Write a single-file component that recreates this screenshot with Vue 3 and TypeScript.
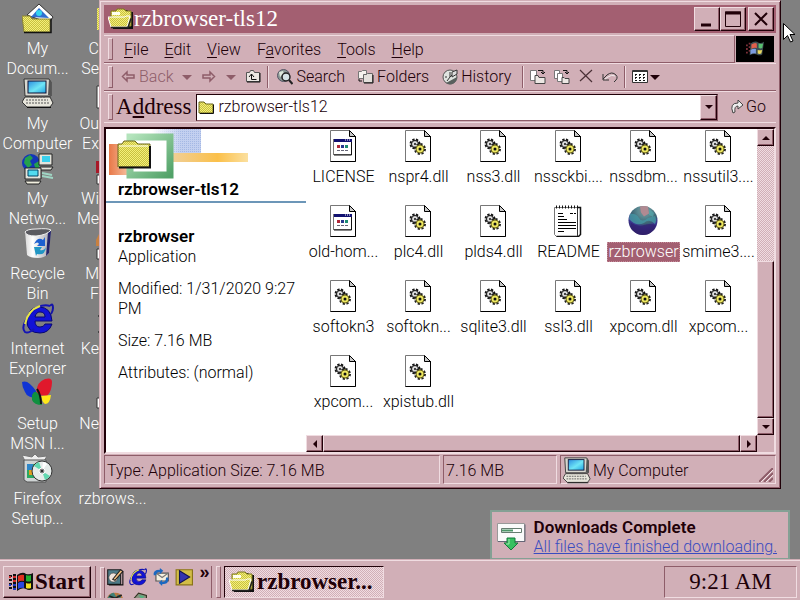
<script setup lang="ts">
interface DesktopItem {
  icon: string
  lines: string[]
  covered?: boolean
}
interface FileItem {
  name: string
  icon: string
  selected?: boolean
}

const shortcuts: DesktopItem[] = [
  { icon: 'docs', lines: ['My', 'Docum...'] },
  { icon: 'computer', lines: ['My', 'Computer'] },
  { icon: 'network', lines: ['My', 'Netwo...'] },
  { icon: 'bin', lines: ['Recycle', 'Bin'] },
  { icon: 'ie', lines: ['Internet', 'Explorer'] },
  { icon: 'msn', lines: ['Setup', 'MSN I...'] },
  { icon: 'setup', lines: ['Firefox', 'Setup...'] },
  { icon: 'edge-yellow', lines: ['C', 'Se'], covered: true },
  { icon: 'edge-white', lines: ['Ou', 'Ex'], covered: true },
  { icon: 'edge-red', lines: ['Wi', 'Me'], covered: true },
  { icon: 'edge-orange', lines: ['M', 'F'], covered: true },
  { icon: 'edge-dots', lines: ['Ke'], covered: true },
  { icon: 'edge-low', lines: ['Ne'], covered: true },
  { icon: 'none', lines: ['rzbrows...'] },
]

const menus: [string, string, string][] = [
  ['', 'F', 'ile'],
  ['', 'E', 'dit'],
  ['', 'V', 'iew'],
  ['F', 'a', 'vorites'],
  ['', 'T', 'ools'],
  ['', 'H', 'elp'],
]

const files: FileItem[] = [
  { name: 'LICENSE', icon: 'page' },
  { name: 'nspr4.dll', icon: 'dll' },
  { name: 'nss3.dll', icon: 'dll' },
  { name: 'nssckbi....', icon: 'dll' },
  { name: 'nssdbm...', icon: 'dll' },
  { name: 'nssutil3....', icon: 'dll' },
  { name: 'old-hom...', icon: 'page' },
  { name: 'plc4.dll', icon: 'dll' },
  { name: 'plds4.dll', icon: 'dll' },
  { name: 'README', icon: 'notes' },
  { name: 'rzbrowser', icon: 'globe', selected: true },
  { name: 'smime3....', icon: 'dll' },
  { name: 'softokn3', icon: 'dll' },
  { name: 'softokn...', icon: 'dll' },
  { name: 'sqlite3.dll', icon: 'dll' },
  { name: 'ssl3.dll', icon: 'dll' },
  { name: 'xpcom.dll', icon: 'dll' },
  { name: 'xpcom...', icon: 'dll' },
  { name: 'xpcom...', icon: 'dll' },
  { name: 'xpistub.dll', icon: 'dll' },
]

const quickLaunch = [
  { icon: 'q-desk', label: 'Show Desktop' },
  { icon: 'ie', label: 'Internet Explorer' },
  { icon: 'q-mail', label: 'Outlook Express' },
  { icon: 'q-play', label: 'Media Player' },
  { icon: 'q-orb', label: 'Browser' },
  { icon: 'q-orb2', label: 'Mail' },
]
</script>

<template>
  <div class="screen">
    <svg class="sprite" aria-hidden="true">
      <defs>
        <pattern id="dither" width="2" height="2" patternUnits="userSpaceOnUse">
          <rect width="2" height="2" fill="#f4f07a" />
          <rect width="1" height="1" fill="#c8c040" />
          <rect x="1" y="1" width="1" height="1" fill="#c8c040" />
        </pattern>
        <linearGradient id="scr" x1="0" y1="0" x2="1" y2="1">
          <stop offset="0" stop-color="#2a8ce0" /><stop offset=".55" stop-color="#6fe6f6" /><stop offset="1" stop-color="#1f9ee0" />
        </linearGradient>
        <linearGradient id="pot" x1="0" x2="1">
          <stop offset="0" stop-color="#d8d8d8" /><stop offset=".3" stop-color="#fff" /><stop offset="1" stop-color="#a4a4ac" />
        </linearGradient>
        <radialGradient id="orb" cx=".55" cy=".15" r=".9">
          <stop offset="0" stop-color="#8a8a90" /><stop offset=".25" stop-color="#5a8a92" /><stop offset=".5" stop-color="#3c6474" /><stop offset=".65" stop-color="#3a3590" /><stop offset="1" stop-color="#2b1a58" />
        </radialGradient>
      </defs>

      <symbol id="docs" viewBox="0 0 32 32">
        <path d="M5 12 17 1 31 14 27 20Z" fill="#fff" stroke="#333" />
        <path d="M9 14 17 5 27 15Z" fill="#2f6fd0" />
        <circle cx="17" cy="10" r="3" fill="#35d4ee" />
        <path d="M0 13h8l2 3h18v13H2Z" fill="url(#dither)" stroke="#8a8430" />
        <path d="M2 29.500h27v-14" fill="none" stroke="#111" stroke-width="1.500" />
      </symbol>

      <symbol id="computer" viewBox="0 0 32 32">
        <path d="M2 1h25l2 3v14H3Z" fill="#d8d8d0" stroke="#333" />
        <path d="M27 1l2 3v14l-3-1Z" fill="#555" />
        <rect x="6" y="3" width="18" height="12" fill="url(#scr)" stroke="#113" />
        <path d="M3 19h25l3 6-3 4H5l-5-5Z" fill="#e8e6dc" stroke="#333" />
        <path d="M4 22h22M4 25h23M9 19h14" stroke="#555" stroke-dasharray="2 1" />
        <path d="M5 29.500h24" stroke="#111" />
      </symbol>

      <symbol id="network" viewBox="0 0 32 32">
        <circle cx="9" cy="10" r="9" fill="#1436b8" />
        <path d="M3 5l5-3 3 3-3 3 2 4-4 3-4-5Z" fill="#24a04c" />
        <path d="M12 11l5-3v7l-3 2Z" fill="#24a04c" />
        <path d="M17 1h13v11H17Z" fill="#e4e4dc" stroke="#222" />
        <path d="M20 3h8v6h-8Z" fill="#39d0ee" />
        <path d="M18 14h13l-2 3H18Z" fill="#e4e4dc" stroke="#222" />
        <path d="M20 20l10 2M20 23l11 2" stroke="#9fd6c4" stroke-width="2" />
        <path d="M3 15h16v11H3Z" fill="#e4e4dc" stroke="#222" />
        <path d="M6 17h10v6H6Z" fill="#52dcf0" stroke="#046" />
        <path d="M3 28h16l-2 3H5Z" fill="#f2f0e0" stroke="#222" />
      </symbol>

      <symbol id="bin" viewBox="0 0 32 32">
        <path d="M3 3 29 2 27 25q-4 5-11 5-8 0-11-3Z" fill="url(#pot)" />
        <path d="M29 3l-2 22-3 3 2-24Z" fill="#24246a" />
        <path d="M3 4q2-3 11-3 12-1 15 1-4 5-15 6-10 0-11-4Z" fill="#5a5a60" stroke="#eee" />
        <path d="M12 16q4-8 9-4l2-3v9h-8l2-2q-1-3-5 0Z" fill="#1d5fd0" />
        <path d="M24 19q-1 9-9 7l-1 2-2-9 8 0-2 3q4 1 6-3Z" fill="#2196c4" />
      </symbol>

      <symbol id="ie" viewBox="0 0 32 32">
        <path d="M28 3q3-4 3 2 0 3-2 6" fill="none" stroke="#1414a8" stroke-width="2" />
        <path fill-rule="evenodd" d="M17 4q12 0 13 14H13q0 6 5 6 4 0 5-3h7q-3 9-12 9-13 0-13-12Q6 4 17 4ZM13 14h10q0-5-5-5-4 0-5 5Z" fill="#1212d6" stroke="#080870" />
        <path d="M28 3Q18 0 8 11-2 24 3 29q3 2 9-3" fill="none" stroke="#1414b4" stroke-width="2" />
        <path d="M18 3Q6 7 3 21" fill="none" stroke="#e6e648" stroke-width="2" />
      </symbol>

      <symbol id="msn" viewBox="0 0 32 32">
        <path d="M0 4q6-3 14 9l2 7q-11 0-13-6Q0 9 0 4Z" fill="#1034d4" />
        <path d="M15 17q-2-12 8-16 7-2 7 3 0 9-5 14Z" fill="#e0182c" />
        <path d="M10 17q3-7 8 1l2 9q-8 0-10-5Z" fill="#109040" />
        <path d="M19 18l10-1q-1 9-6 9-3-2-4-8Z" fill="#ffe818" />
        <path d="M15 11q4 6 4 15" fill="none" stroke="#111" stroke-width="2" />
      </symbol>

      <symbol id="setup" viewBox="0 0 32 32">
        <path d="M2 6 0 2l10 2 3-3 3 3 9-1-3 5v20H4Z" fill="#eee" stroke="#777" />
        <path d="M2 7h22v22H5l-3-2Z" fill="#cfd4d4" stroke="#555" />
        <path d="M5 11h14v14H5Z" fill="#2aa860" />
        <path d="M5 11h6v6H5Z" fill="#2e86c8" /><path d="M7 17h5v5H7Z" fill="#e0a020" />
        <circle cx="20" cy="18" r="10" fill="#e6ecea" stroke="#333" />
        <path d="M20 18l-8-5a10 10 0 0 1 5-4ZM20 18l8 5a10 10 0 0 1-5 4Z" fill="#62d8b0" />
        <path d="M20 18l1-9a9 9 0 0 1 4 2Z" fill="#fff" />
        <circle cx="20" cy="18" r="3" fill="#888" stroke="#fff" /><circle cx="20" cy="18" r="1" fill="#111" />
      </symbol>

      <symbol id="edge-yellow" viewBox="0 0 32 32"><path d="M1 5h30v22H1Z" fill="url(#dither)" /></symbol>
      <symbol id="edge-white" viewBox="0 0 32 32"><path d="M1 8h30v22H1Z" fill="#fff" stroke="#333" /></symbol>
      <symbol id="edge-red" viewBox="0 0 32 32"><path d="M0 8h32v12H0Z" fill="#a81828" /><path d="M1 22h30v9H1Z" fill="#fff" stroke="#333" /></symbol>
      <symbol id="edge-orange" viewBox="0 0 32 32"><path d="M0 12 4 4h26v14H0Z" fill="#c88040" /><path d="M1 21h30v10H1Z" fill="#fff" stroke="#333" /></symbol>
      <symbol id="edge-dots" viewBox="0 0 32 32"><path d="M2 12h6v2H2ZM2 28h6v2H2Z" fill="#444" /></symbol>
      <symbol id="edge-low" viewBox="0 0 32 32"><path d="M1 20h30v10H1Z" fill="#fff" stroke="#333" /></symbol>
      <symbol id="none" viewBox="0 0 32 32" />

      <symbol id="sheet" viewBox="0 0 32 32">
        <path d="M3.500.500h19l6 6v25h-25Z" fill="#fff" stroke="#777" />
        <path d="M28.500 6v25.500h-25" fill="none" stroke="#000" />
        <path d="M22.500.500v6h6Z" fill="#c8c8c8" stroke="#000" />
      </symbol>
      <symbol id="page" viewBox="0 0 32 32">
        <use href="#sheet" />
        <rect x="6.500" y="9.500" width="18" height="15" fill="#fff" stroke="#777" />
        <path d="M24.500 10v15H7" fill="none" stroke="#111" />
        <path d="M7 9h18v3H7Z" fill="#101070" />
        <path d="M18 10h1M20 10h1M22 10h1" stroke="#fff" />
        <path d="M10 15h3v3h-3Z" fill="#b02838" /><path d="M14 15h3v3h-3Z" fill="#26388c" /><path d="M18 15h3v3h-3Z" fill="#1c8c70" />
        <path d="M10 20.500h3M14 20.500h3M18 20.500h3" stroke="#667" />
      </symbol>
      <symbol id="dll" viewBox="0 0 32 32">
        <use href="#sheet" />
        <circle cx="13" cy="14" r="4" fill="#fff" stroke="#111" stroke-width="3" stroke-dasharray="2 1.200" />
        <circle cx="13" cy="14" r="3.500" fill="#ddd" stroke="#111" />
        <circle cx="13" cy="14" r="1" fill="#111" />
        <circle cx="18" cy="19" r="4.500" fill="#eee860" stroke="#222" stroke-width="3" stroke-dasharray="2 1.500" />
        <circle cx="18" cy="19" r="4" fill="#eee860" stroke="#6a6420" />
        <circle cx="18" cy="19" r="1.500" fill="#111" />
      </symbol>
      <symbol id="notes" viewBox="0 0 32 32">
        <path d="M2.500 2.500h23v29h-21l-2-2Z" fill="#fff" stroke="#777" />
        <path d="M25.500 2.500h3v27l-2 2h-22" fill="none" stroke="#111" stroke-width="1.500" />
        <path d="M25.500 3v28" stroke="#333" />
        <path d="M4 2h23" stroke="#111" stroke-width="3" stroke-dasharray="1 2" />
        <path d="M6 8.500h5M18 8.500h3M22 8.500h2M6 11.500h6M6 14.500h9M6 17.500h18M6 20.500h18M6 23.500h18M6 26.500h6" stroke="#000" />
      </symbol>
      <symbol id="globe" viewBox="0 0 32 32">
        <circle cx="16" cy="15.500" r="14.500" fill="url(#orb)" />
        <path d="M3 9q6-1 9 4t9 0l7-2q2 4 0 8-6-6-11-1-8 4-15-4Z" fill="#4596a4" opacity=".8" />
        <path d="M13 1.500q4-1 8 0l1 7-5 3-3-4Z" fill="#b08a92" />
        <path d="M22 4l5 4-1 4-4-2Z" fill="#54a8ac" opacity=".7" />
        <path d="M4 18q7 4 13 2t12 0q-4 10-13 10T4 21Z" fill="#30206e" opacity=".7" />
      </symbol>

      <symbol id="folder-open" viewBox="0 0 26 22">
        <path d="M5 4h5l2-2h7l2 2h4v17H5Z" fill="#111" />
        <path d="M3 3h5l1-2h7l2 2h5v15H3Z" fill="url(#dither)" stroke="#7c7820" />
        <path d="M4 4h8v3H4Z" fill="#fffff0" />
        <path d="M0 9h17l1-1h4l-3 11H3Z" fill="url(#dither)" stroke="#fff" />
        <path d="M3 19.500h17l3-9" fill="none" stroke="#222" stroke-width="1.500" />
      </symbol>
      <symbol id="folder-small" viewBox="0 0 16 16">
        <path d="M1 3h5l2 2h7v9H1Z" fill="url(#dither)" stroke="#6d691c" />
        <path d="M2 14.500h13.500v-9" fill="none" stroke="#111" />
      </symbol>

      <symbol id="arrow-left" viewBox="0 0 16 16"><path d="M2.500 7.500 7 3v3h7v3H7v3Z" fill="none" stroke="#8e5d69" stroke-width="1.500" /></symbol>
      <symbol id="arrow-right" viewBox="0 0 16 16"><path d="M13.500 7.500 9 3v3H2v3h7v3Z" fill="none" stroke="#8e5d69" stroke-width="1.500" /></symbol>
      <symbol id="folder-up" viewBox="0 0 16 16">
        <path d="M1.500 3.500h3l1-2h3l1 2h5v9h-13Z" fill="#ece8e4" stroke="#555" />
        <path d="M15 4v9H2" fill="none" stroke="#111" />
        <path d="M4 8 6.500 5 9 8M6.500 5v5.500h5" fill="none" stroke="#111" />
      </symbol>
      <symbol id="search" viewBox="0 0 16 16">
        <circle cx="6.500" cy="6.500" r="6" fill="#8a9894" stroke="#556" />
        <path d="M2 3l4-1 1 3-4 3Z" fill="#dce8dc" />
        <circle cx="9" cy="8" r="4" fill="#d5e4e6" stroke="#222" stroke-width="1.500" />
        <path d="M12 11l3.500 4" stroke="#222" stroke-width="2" />
      </symbol>
      <symbol id="folders" viewBox="0 0 16 16">
        <path d="M.500 2.500h3l1-1h4v8h-8Z" fill="#f6f2ee" stroke="#777" />
        <path d="M5.500 5.500h3l1-1h5v9h-9Z" fill="#e4e0dc" stroke="#666" />
        <path d="M15 6v8H6" fill="none" stroke="#111" /><path d="M1 10v2h3" fill="none" stroke="#111" />
      </symbol>
      <symbol id="history" viewBox="0 0 16 16">
        <circle cx="8" cy="8" r="7" fill="#e0e4e0" stroke="#555" />
        <path d="M15 8A7 7 0 0 1 4 14Z" fill="#59605e" />
        <path d="M8 8V3M8 8l6-6M3 8h2M8 8l-3 4" stroke="#333" /><path d="M10 3l5-2v4l-5 3Z" fill="#ddd" stroke="#333" />
      </symbol>
      <symbol id="move-to" viewBox="0 0 16 16">
        <path d="M.500 1.500h6v10h-6Z" fill="#fff" stroke="#777" /><path d="M5 6.500h3l1 2h6v6H5Z" fill="#ece8e4" stroke="#444" />
        <path d="M8 1.500h5V5M11 3l2 2 2-2" fill="none" stroke="#111" />
      </symbol>
      <symbol id="copy-to" viewBox="0 0 16 16">
        <path d="M.500 1.500h5v8h-5Z" fill="#fff" stroke="#777" /><path d="M3.500 4.500h5v8h-5Z" fill="#fff" stroke="#777" /><path d="M8 8.500h2l1 1h4v5H8Z" fill="#ece8e4" stroke="#444" />
        <path d="M9 1.500h4V5M11 3l2 2 2-2" fill="none" stroke="#111" />
      </symbol>
      <symbol id="delete" viewBox="0 0 16 16"><path d="M2 1l12 12M14 1 2 12" stroke="#4a3036" stroke-width="1.200" /></symbol>
      <symbol id="undo" viewBox="0 0 16 16"><path d="M1 5v6h6M1 10l4-4q5-4 9 0 3 3-2 7" fill="none" stroke="#333" /><path d="M3 10l3-2q4-3 7-1" fill="none" stroke="#eee" /></symbol>
      <symbol id="views" viewBox="0 0 16 16">
        <path d="M.500 1.500h15v12H.500Z" fill="#fff" stroke="#333" /><path d="M1 2.500h14" stroke="#333" />
        <path d="M3 5.500h11M3 8.500h11M3 11.500h11" stroke="#111" stroke-dasharray="2 2" />
        <path d="M3 6.500h11M3 9.500h11" stroke="#333" stroke-dasharray="1 3" />
      </symbol>
      <symbol id="go" viewBox="0 0 16 16">
        <path d="M3 14Q-1 4 8 4V1l5 5-5 4V7Q4 7 5 13Z" fill="#eee" stroke="#444" />
      </symbol>

      <symbol id="flag" viewBox="0 0 26 20">
        <path d="M1 4h3M1 8h3M1 12h3M1 16h3M5 3h3M5 7h3M5 11h3M5 15h3" stroke="#111" stroke-width="2" />
        <path d="M1 5h2M5 5h3M5 9h3" stroke="#d02828" stroke-width="2" /><path d="M1 13h2M5 13h3M5 17h3" stroke="#2038c0" stroke-width="2" />
        <path d="M9 3q6-4 9-1 4 1 7-1v16q-4 2-7 0-4-2-9 2Z" fill="#111" />
        <path d="M10 4q4-2 6-1v6q-3-1-6 1Z" fill="#e03020" /><path d="M18 3q3 1 5 0v6q-3 1-5 0Z" fill="#20b030" />
        <path d="M10 11q3-2 6-1v6q-3-1-6 1Z" fill="#2848e0" /><path d="M18 11q3 1 5 0v5q-3 1-5 0Z" fill="#f0e020" />
      </symbol>
      <symbol id="flag-glow" viewBox="0 0 26 20">
        <path d="M3 6h2M3 10h2M3 14h2M6 4h2M6 8h2M6 12h2" stroke="#7c3038" stroke-width="2" />
        <path d="M8 4q5-4 9-1 3 1 6-1l-2 14q-3 2-6 0-4-1-8 1Z" fill="#3c4c50" />
        <path d="M9 5q4-3 6-1v5q-3-1-6 1Z" fill="#e0604c" /><path d="M17 4q3 1 5 0l-1 5q-2 1-4 0Z" fill="#58c070" />
        <path d="M8 11q3-2 6-1v5q-3-1-6 1Z" fill="#7c9ce0" /><path d="M16 11q3 1 5 0l-1 4q-2 1-4 0Z" fill="#e8d860" />
      </symbol>
      <symbol id="q-desk" viewBox="0 0 32 32">
        <path d="M3 3h23v26H3Z" fill="#4d7b88" stroke="#222" stroke-width="2" /><circle cx="13" cy="17" r="8" fill="#f0e4dc" stroke="#333" />
        <path d="M12 20 26 3l4 3-14 16Z" fill="#f4c080" stroke="#222" stroke-width="2" /><path d="M30 6v24H5" fill="none" stroke="#111" stroke-width="2" />
      </symbol>
      <symbol id="q-mail" viewBox="0 0 32 32">
        <path d="M7 9h22v14H7Z" fill="#f6f0e0" stroke="#555" stroke-width="2" /><path d="M7 9l11 8 11-8" fill="none" stroke="#777" stroke-width="2" />
        <path d="M3 13Q1 3 14 3V0l6 5-6 6V7q-6 0-7 6Z" fill="#1c68c0" /><path d="M29 17q2 12-11 12v3l-6-6 6-5v4q7 0 7-8Z" fill="#1c68c0" />
      </symbol>
      <symbol id="q-play" viewBox="0 0 32 32">
        <path d="M2 3h29v27H2Z" fill="#d2bd46" stroke="#8a7418" stroke-width="2" /><path d="M8 5l18 11L8 27Z" fill="#3434b0" stroke="#141450" stroke-width="2" />
      </symbol>
      <symbol id="q-orb" viewBox="0 0 32 32"><path d="M1 16Q3 3 16 3t15 13v16H1Z" fill="#bd7840" /><path d="M3 12q5-9 11-9l4 7-8 8ZM19 6l8 2-2 8Z" fill="#3f8078" /><path d="M6 9l10 4 12-6" stroke="#222" stroke-width="3" fill="none" /></symbol>
      <symbol id="q-orb2" viewBox="0 0 32 32"><path d="M1 16l8-3 8-9 14 4v16H5Z" fill="#8a9480" stroke="#332" stroke-width="2" /><path d="M17 7l10 2-4 7Z" fill="#55b080" /></symbol>

      <symbol id="download" viewBox="0 0 32 32">
        <path d="M1.500 3.500h27v18h-27Z" fill="#fafafa" stroke="#999" /><path d="M2 21.500h27v-17" fill="none" stroke="#667" />
        <path d="M5.500 8.500h20v4h-20Z" fill="#fff" stroke="#667c70" /><path d="M6 10.500h11" stroke="#4c9668" stroke-width="2" />
        <path d="M11 18h8v5h3l-7 7-7-7h3Z" fill="#38c060" stroke="#14783c" />
        <path d="M13 19v5h-3" fill="none" stroke="#9cecac" />
      </symbol>
    </svg>

    <main class="desktop">
      <ul class="shortcuts">
        <li v-for="(s, i) in shortcuts" :key="i">
          <button class="tile" :class="{ covered: s.covered }">
            <svg width="32" height="32" aria-hidden="true"><use :href="'#' + s.icon" /></svg>
            <span v-for="line in s.lines" :key="line">{{ line }}</span>
          </button>
        </li>
      </ul>

      <section class="window">
        <header class="titlebar">
          <svg width="26" height="22" aria-hidden="true"><use href="#folder-open" /></svg>
          <h1>rzbrowser-tls12</h1>
          <button class="cap" aria-label="Minimize"><svg width="16" height="16"><path d="M2 14h10" stroke="#200008" stroke-width="3" /></svg></button>
          <button class="cap" aria-label="Maximize"><svg width="16" height="16"><path d="M.5 1h15v14.500H.5Z" fill="none" stroke="#200008" /><path d="M0 2h16" stroke="#200008" stroke-width="3" /></svg></button>
          <button class="cap close" aria-label="Close"><svg width="16" height="16"><path d="M2 2l12 12M14 2 2 14" stroke="#200008" stroke-width="2" /></svg></button>
        </header>

        <div class="menurow">
          <nav class="menubar grip">
            <button v-for="m in menus" :key="m[0] + m[1] + m[2]">{{ m[0] }}<u>{{ m[1] }}</u>{{ m[2] }}</button>
          </nav>
          <div class="throbber"><svg width="24" height="18" aria-hidden="true"><use href="#flag-glow" /></svg></div>
        </div>

        <div class="toolbar grip">
          <button class="tool dim back"><svg width="16" height="16"><use href="#arrow-left" /></svg>Back</button>
          <button class="drop dim" aria-label="Back list"><i class="tri down" /></button>
          <button class="tool dim" aria-label="Forward"><svg width="16" height="16"><use href="#arrow-right" /></svg></button>
          <button class="drop dim" aria-label="Forward list"><i class="tri down" /></button>
          <button class="tool" aria-label="Up"><svg width="16" height="16"><use href="#folder-up" /></svg></button>
          <span class="sep" />
          <button class="tool named"><svg width="16" height="16"><use href="#search" /></svg>Search</button>
          <button class="tool named"><svg width="16" height="16"><use href="#folders" /></svg>Folders</button>
          <button class="tool named"><svg width="16" height="16"><use href="#history" /></svg>History</button>
          <span class="sep" />
          <button class="tool" aria-label="Move To"><svg width="16" height="16"><use href="#move-to" /></svg></button>
          <button class="tool" aria-label="Copy To"><svg width="16" height="16"><use href="#copy-to" /></svg></button>
          <button class="tool" aria-label="Delete"><svg width="16" height="16"><use href="#delete" /></svg></button>
          <button class="tool" aria-label="Undo"><svg width="16" height="16"><use href="#undo" /></svg></button>
          <span class="sep" />
          <button class="tool views" aria-label="Views"><svg width="16" height="16"><use href="#views" /></svg><i class="tri down" /></button>
        </div>

        <div class="address grip">
          <label for="path">A<u>d</u>dress</label>
          <div class="combo">
            <svg width="16" height="16" aria-hidden="true"><use href="#folder-small" /></svg>
            <input id="path" type="text" value="rzbrowser-tls12" />
            <button class="raised" aria-label="Address list"><i class="tri small down" /></button>
          </div>
          <button class="go"><svg width="16" height="16"><use href="#go" /></svg>Go</button>
        </div>

        <div class="content">
          <aside class="info">
            <div class="banner">
              <svg width="200" height="54" aria-hidden="true">
                <defs>
                  <pattern id="bluedots" width="2" height="2" patternUnits="userSpaceOnUse"><rect width="2" height="2" fill="#c3d0f0" /><rect width="1" height="1" fill="#a4b8e4" /></pattern>
                  <linearGradient id="fadeblue"><stop offset="0" stop-color="#fff" /><stop offset=".6" stop-color="#fff" stop-opacity="0" /></linearGradient>
                  <linearGradient id="gold" x1="0" x2="1"><stop offset="0" stop-color="#f0cf98" /><stop offset=".6" stop-color="#fbc04a" /><stop offset="1" stop-color="#fbe0a0" /></linearGradient>
                  <linearGradient id="grn" x1="0" y1="0" x2="1" y2="1"><stop offset="0" stop-color="#b4e4bc" /><stop offset="1" stop-color="#52a268" /></linearGradient>
                  <linearGradient id="org" x1="0" x2="1"><stop offset="0" stop-color="#e87848" /><stop offset="1" stop-color="#fbd8bc" /></linearGradient>
                </defs>
                <rect x="46" y="0" width="49" height="24" fill="url(#bluedots)" />
                <rect x="46" y="0" width="49" height="24" fill="url(#fadeblue)" />
                <rect x="66" y="24" width="76" height="9" fill="url(#gold)" />
                <path d="M3 15h9v24h17v7H3Z" fill="url(#org)" />
                <rect x="24" y="8" width="40" height="38" fill="#fff" stroke="url(#grn)" stroke-width="7" />
                <path d="M12 15h4l2-3h11l3 3h12v23H12Z" fill="url(#dither)" stroke="#6d6820" />
                <path d="M13 38.500h31V17" fill="none" stroke="#111" stroke-width="2" />
                <path d="M13 17h29" stroke="#fffff0" />
              </svg>
              <h2>rzbrowser-tls12</h2>
            </div>
            <div class="facts">
              <p><b>rzbrowser</b><br />Application</p>
              <p>Modified: 1/31/2020 9:27 PM</p>
              <p>Size: 7.16 MB</p>
              <p>Attributes: (normal)</p>
            </div>
          </aside>

          <ul class="files">
            <li v-for="(f, i) in files" :key="i">
              <button class="file" :class="{ selected: f.selected }">
                <svg width="32" height="32" aria-hidden="true"><use :href="'#' + f.icon" /></svg>
                <span>{{ f.name }}</span>
              </button>
            </li>
          </ul>

          <div class="vscroll">
            <button class="raised" aria-label="Scroll up"><i class="tri small up" /></button>
            <div class="track" />
            <div class="thumb" />
            <button class="raised" aria-label="Scroll down"><i class="tri small down" /></button>
          </div>

          <div class="hscroll">
            <button class="raised" aria-label="Scroll left"><i class="tri small left" /></button>
            <div class="thumb" />
            <button class="raised" aria-label="Scroll right"><i class="tri small right" /></button>
          </div>
        </div>

        <footer class="status">
          <span class="wide">Type: Application Size: 7.16 MB</span>
          <span class="size">7.16 MB</span>
          <span class="zone"><svg width="28" height="28" aria-hidden="true"><use href="#computer" /></svg>My Computer
            <svg class="sizer" width="14" height="14" aria-hidden="true"><path d="M0 14 14 0M5 14l9-9M10 14l4-4" stroke="#8e5d69" stroke-width="2" /><path d="M2 14 14 2M7 14l7-7" stroke="#f3e2e6" /></svg>
          </span>
        </footer>
      </section>

      <svg class="pointer" width="12" height="20" viewBox="0 0 12 20" aria-hidden="true"><path d="M.5.500v16l4-4 3 6.500 2.500-1-3-6.500h5Z" fill="#fff" stroke="#000" /></svg>

      <aside class="balloon">
        <svg width="32" height="32" aria-hidden="true"><use href="#download" /></svg>
        <div>
          <b>Downloads Complete</b>
          <a href="#">All files have finished downloading.</a>
        </div>
      </aside>
    </main>

    <footer class="taskbar">
      <button class="start"><svg width="26" height="20" aria-hidden="true"><use href="#flag" /></svg>Start</button>
      <div class="quick">
        <button v-for="q in quickLaunch" :key="q.label" :aria-label="q.label">
          <svg width="18" height="18" aria-hidden="true"><use :href="'#' + q.icon" /></svg>
        </button>
      </div>
      <button class="more" aria-label="More">»</button>
      <div class="tasks">
        <button class="task"><svg width="26" height="22" aria-hidden="true"><use href="#folder-open" /></svg>rzbrowser...</button>
      </div>
      <div class="tray">9:21 AM</div>
    </footer>
  </div>
</template>

<style>
body {
  background: #808080;
}
</style>

<style scoped>
.screen {
  --face: #d1afb7;
  --light: #f0dce1;
  --shade: #8e5d69;
  --dark: #200008;
  --active: #a35f71;
  --serif: 'Liberation Serif', serif;
  display: flex;
  flex-direction: column;
  min-height: 100vh;
  overflow: hidden;
  font: 300 16px/20px Roboto, 'Liberation Sans', sans-serif;
  color: var(--dark);
}
.screen * {
  box-sizing: border-box;
}
.sprite {
  position: absolute;
  width: 0;
  height: 0;
}
svg {
  flex: none;
  display: block;
}
button {
  appearance: none;
  border: 0;
  padding: 0;
  margin: 0;
  background: none;
  font: inherit;
  color: inherit;
  white-space: nowrap;
}
ul,
h1,
h2,
p {
  margin: 0;
  padding: 0;
  list-style: none;
}
u {
  text-underline-offset: 2px;
}

/* Desktop */
.desktop {
  position: relative;
  flex: 1;
  background: #808080;
}
.shortcuts {
  display: grid;
  grid-auto-flow: column;
  grid-template-rows: repeat(7, 75px);
  grid-auto-columns: 75px;
  padding-top: 3px;
}
.tile {
  display: flex;
  flex-direction: column;
  align-items: center;
  width: 75px;
  color: #fff;
}
.tile svg {
  margin: 0 0 4px 1px;
}
.covered {
  width: 24px;
  align-items: flex-end;
}
.covered svg {
  align-self: flex-start;
  margin-left: 21px;
}

/* Window frame */
.window {
  position: absolute;
  top: 0;
  left: 99px;
  right: 19px;
  bottom: 71px;
  display: flex;
  flex-direction: column;
  padding: 4px;
  background: var(--face);
  border: 1px solid;
  border-color: var(--face) var(--dark) var(--dark) var(--face);
  box-shadow: inset 1px 1px var(--light), inset -1px -1px var(--shade);
}
.titlebar {
  display: flex;
  align-items: center;
  height: 28px;
  padding: 0 2px;
  background: var(--active);
}
.titlebar h1 {
  flex: 1;
  font: 400 23px/28px var(--serif);
  color: #fff;
}
.titlebar svg {
  margin-left: 2px;
}
.cap {
  display: grid;
  place-items: center;
  width: 26px;
  height: 24px;
  background: var(--face);
  border: 1px solid;
  border-color: var(--light) var(--dark) var(--dark) var(--light);
  box-shadow: inset -1px -1px var(--shade);
}
.cap svg {
  margin: 0;
}
.close {
  margin-left: 2px;
}

/* Bars */
.menurow {
  display: flex;
  height: 28px;
  margin-top: 2px;
}
.grip {
  display: flex;
  align-items: center;
  border-top: 1px solid var(--light);
  border-bottom: 1px solid var(--shade);
}
.grip::before {
  content: '';
  align-self: stretch;
  width: 3px;
  margin: 2px 3px 2px 4px;
  border: 1px solid;
  border-color: var(--light) var(--shade) var(--shade) var(--light);
}
.menubar {
  flex: 1;
  border-right: 1px solid var(--shade);
}
.menubar button {
  padding: 2px 8px 0;
}
.throbber {
  display: grid;
  place-items: center;
  width: 38px;
  margin: 1px 2px 1px 1px;
  background: #000;
}
.toolbar {
  height: 28px;
}
.tool {
  display: flex;
  align-items: center;
  padding: 0 4px;
  gap: 3px;
}
.named {
  padding: 0 7px 0 6px;
}
.named + .sep {
  margin-left: 4px;
}
.dim {
  color: var(--shade);
}
.drop {
  padding: 0 5px;
}
.views {
  gap: 2px;
}
.sep {
  align-self: stretch;
  width: 2px;
  margin: 2px;
  border-left: 1px solid var(--shade);
  border-right: 1px solid var(--light);
}
.tri {
  display: block;
  width: 0;
  height: 0;
  border: 5px solid transparent;
}
.tri.small {
  border-width: 4px;
}
.tri.down {
  border-top-color: currentColor;
  border-bottom: 0;
}
.tri.up {
  border-bottom-color: currentColor;
  border-top: 0;
}
.tri.left {
  border-right-color: currentColor;
  border-left: 0;
}
.tri.right {
  border-left-color: currentColor;
  border-right: 0;
}
.address {
  height: 32px;
  border-bottom-color: var(--light);
}
.address label {
  font: 400 23px/28px var(--serif);
  margin: 0 5px 0 0;
}
.combo {
  flex: 1;
  display: flex;
  align-items: center;
  height: 27px;
  padding-left: 1px;
  background: #fff;
  border: 1px solid;
  border-color: var(--dark) var(--shade) var(--shade) var(--dark);
}
.combo input {
  flex: 1;
  min-width: 0;
  border: 0;
  padding: 0 4px;
  background: none;
  font: inherit;
  color: inherit;
  outline: 0;
}
.raised {
  display: grid;
  place-items: center;
  width: 17px;
  height: 17px;
  background: var(--face);
  border: 1px solid;
  border-color: var(--light) var(--dark) var(--dark) var(--light);
  box-shadow: inset -1px -1px var(--shade);
}
.combo .raised {
  height: 25px;
}
.go {
  display: flex;
  align-items: center;
  padding: 0 10px 0 12px;
}

/* Folder view */
.content {
  flex: 1;
  display: grid;
  grid-template: 1fr 17px / 200px 1fr 17px;
  min-height: 0;
  margin: 4px 0 1px;
  background: var(--face);
  border: 2px solid;
  border-color: var(--dark) var(--light) var(--light) var(--dark);
}
.info {
  grid-row: 1 / 3;
  background: #fff;
  color: #000;
  overflow: hidden;
}
.banner {
  height: 74px;
  border-bottom: 2px solid #6c96b8;
}
.banner svg {
  height: 50px;
}
.banner h2 {
  padding-left: 12px;
}
.banner h2,
.facts b,
.balloon b {
  font-size: 17px;
  font-weight: 600;
  line-height: 20px;
}
.facts {
  display: grid;
  gap: 12px;
  padding: 23px 10px 0 12px;
}
.files {
  display: grid;
  grid-template-columns: repeat(auto-fill, 75px);
  grid-auto-rows: 75px;
  align-content: start;
  padding-top: 1px;
  min-height: 0;
  overflow: hidden;
  background: #fff;
  color: #000;
}
.file {
  display: flex;
  flex-direction: column;
  align-items: center;
  gap: 5px;
  width: 75px;
}
.file svg {
  margin-right: 1px;
}
.selected span {
  padding: 0 1px;
  background: var(--active);
  color: #fff;
  outline: 1px dotted #c48a98;
  outline-offset: -1px;
}
.vscroll {
  display: flex;
  flex-direction: column;
}
.track {
  flex: 116;
  background: repeating-conic-gradient(var(--light) 0 25%, var(--face) 0 50%) 0 0 / 2px 2px;
}
.thumb {
  flex: 156;
  border: 1px solid;
  border-color: var(--light) var(--dark) var(--dark) var(--light);
  box-shadow: inset -1px -1px var(--shade);
}
.hscroll {
  grid-column: 2;
  display: flex;
}

/* Status bar */
.status {
  display: flex;
  gap: 3px;
  height: 29px;
}
.status span {
  display: flex;
  align-items: center;
  padding: 2px 2px 0;
  white-space: nowrap;
  border: 1px solid;
  border-color: var(--shade) var(--light) var(--light) var(--shade);
}
.status .wide {
  flex: 1;
}
.status .size {
  width: 114px;
}
.status .zone {
  width: 216px;
  gap: 2px;
}
.status .sizer {
  align-self: flex-end;
  margin: 0 0 1px auto;
}

.pointer {
  position: absolute;
  left: 783px;
  top: 23px;
}

/* Notification */
.balloon {
  position: absolute;
  right: 10px;
  bottom: 0;
  display: flex;
  gap: 6px;
  padding: 5px 11px 1px 4px;
  background: var(--face);
  border: 2px solid #84a094;
}
.balloon svg {
  margin-top: 3px;
}
.balloon b,
.balloon a {
  display: block;
  white-space: nowrap;
}
.balloon a {
  color: #3a4cc0;
}

/* Taskbar */
.taskbar {
  position: relative;
  display: flex;
  align-items: center;
  height: 41px;
  margin-top: -1px;
  padding: 4px 3px 1px;
  background: var(--face);
  border-top: 1px solid var(--face);
  box-shadow: inset 0 1px var(--light);
}
.start {
  display: flex;
  align-items: center;
  gap: 1px;
  width: 88px;
  height: 32px;
  padding-left: 4px;
  font: 700 23px/30px var(--serif);
  border: 1px solid;
  border-color: var(--light) var(--dark) var(--dark) var(--light);
  box-shadow: inset -1px -1px var(--shade);
}
.quick {
  display: grid;
  grid-template-columns: repeat(4, 23px);
  grid-auto-rows: 23px;
  height: 32px;
  overflow: hidden;
  margin-left: 4px;
  padding: 2px 0 0 10px;
  border-left: 1px solid var(--shade);
  position: relative;
}
.quick button {
  align-self: start;
  justify-self: start;
}
.quick::before,
.tasks::before {
  content: '';
  width: 3px;
  height: 30px;
  border: 1px solid;
  border-color: var(--light) var(--shade) var(--shade) var(--light);
}
.quick::before {
  position: absolute;
  left: 4px;
  top: 1px;
}
.more {
  align-self: flex-start;
  width: 13px;
  font: 700 18px/16px 'Liberation Sans', sans-serif;
}
.tasks {
  flex: 1;
  display: flex;
  align-items: center;
  gap: 3px;
  height: 32px;
  padding-left: 4px;
  border-left: 1px solid var(--shade);
}
.task {
  display: flex;
  align-items: center;
  gap: 2px;
  width: 160px;
  height: 32px;
  padding-left: 4px;
  font: 700 23px/30px var(--serif);
  background: repeating-conic-gradient(var(--light) 0 25%, var(--face) 0 50%) 0 0 / 2px 2px;
  border: 1px solid;
  border-color: var(--dark) var(--light) var(--light) var(--dark);
}
.tray {
  width: 133px;
  height: 32px;
  text-align: center;
  font: 400 23px/30px var(--serif);
  border: 1px solid;
  border-color: var(--shade) var(--light) var(--light) var(--shade);
}
</style>
